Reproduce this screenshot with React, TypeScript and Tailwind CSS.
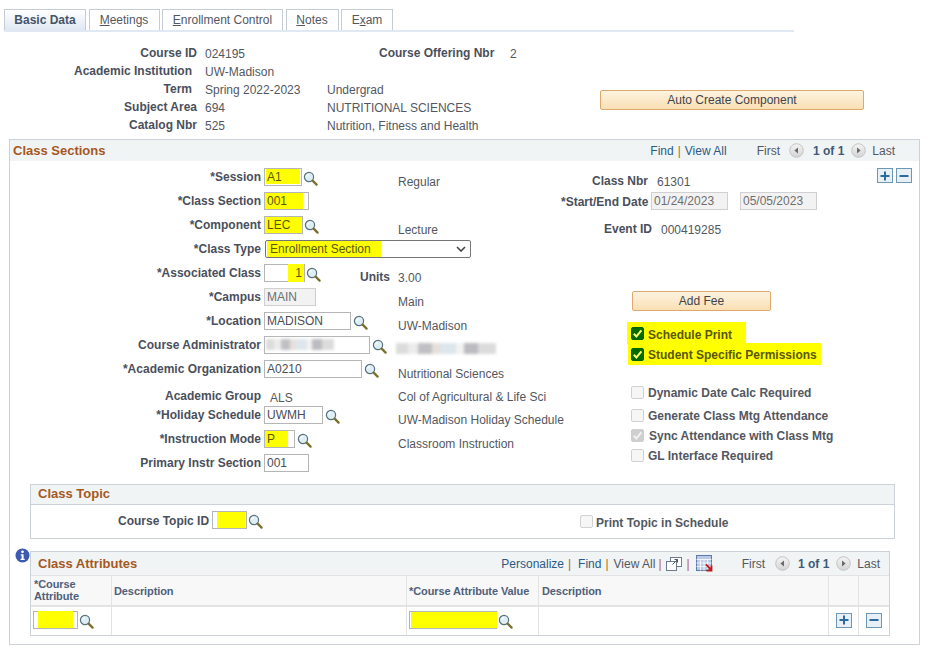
import React from "react";

const Lens = ({ className = "" }: { className?: string }) => (
  <svg width="15" height="15" viewBox="0 0 15 15" className={"mt-[2px] shrink-0 " + className}>
    <circle cx="6" cy="6" r="4.6" fill="#dfeef5" stroke="#56707c" strokeWidth="1.2" />
    <path d="M3.5 5.5a3 3 0 0 1 2.5-2" stroke="#ffffff" strokeWidth="1.2" fill="none" />
    <path d="M9.6 9.6l4 4" stroke="#77702c" strokeWidth="2.2" strokeLinecap="round" />
  </svg>
);

const NavArrow = ({ dir }: { dir: "l" | "r" }) => (
  <svg width="15" height="15" viewBox="0 0 15 15" className="shrink-0">
    <defs>
      <linearGradient id="navg" x1="0" y1="0" x2="0" y2="1">
        <stop offset="0" stopColor="#f4f4f4" />
        <stop offset="1" stopColor="#d4d4d4" />
      </linearGradient>
    </defs>
    <circle cx="7.5" cy="7.5" r="6.8" fill="url(#navg)" stroke="#c4c4c4" />
    <path d={dir === "l" ? "M9 4.5v6l-3.6-3z" : "M6 4.5v6l3.6-3z"} fill="#6a6a6a" />
  </svg>
);

const PlusBtn = () => (
  <span className="flex h-[15px] w-[16px] items-center justify-center border border-[#6d98b5] bg-[#e8f0f5]">
    <svg width="10" height="10" viewBox="0 0 10 10"><path d="M5 0.5v9M0.5 5h9" stroke="#2b6a9f" strokeWidth="2" /></svg>
  </span>
);
const MinusBtn = () => (
  <span className="flex h-[15px] w-[16px] items-center justify-center border border-[#6d98b5] bg-[#e8f0f5]">
    <svg width="10" height="10" viewBox="0 0 10 10"><path d="M0.5 5h9" stroke="#2b6a9f" strokeWidth="2" /></svg>
  </span>
);

type InputProps = { w: number; text?: string; hl?: [number, number, number?, number?]; right?: boolean; disabled?: boolean; children?: React.ReactNode };
const Input = ({ w, text, hl, right, disabled, children }: InputProps) => (
  <div
    className={"relative h-[18px] shrink-0 border text-[12px] leading-[14px] " + (disabled ? "border-[#d0d0d0] bg-[#f2f2f2] text-[#6f6f6f]" : "border-[#b5b5b5] bg-white text-[#4a4d55]")}
    style={{ width: w }}
  >
    {hl && <span className="absolute bg-[#ffff00]" style={{ left: hl[0], width: hl[1], top: hl[2] ?? 0, bottom: hl[3] ?? 0 }} />}
    <span className={"absolute inset-x-[2px] top-[1px] whitespace-nowrap " + (right ? "text-right " : "") + (hl ? "text-[#5a5700]" : "")}>{text}</span>
    {children}
  </div>
);

const Blur = ({ w }: { w: number }) => (
  <div className="flex h-[11px] blur-[1.5px]" style={{ width: w }}>
    <span className="w-[12%] bg-[#dcdcdc]" />
    <span className="w-[10%] bg-[#ececec]" />
    <span className="w-[14%] bg-[#c0c0c4]" />
    <span className="w-[8%] bg-[#e6e0dc]" />
    <span className="w-[16%] bg-[#dde6ec]" />
    <span className="w-[8%] bg-[#f2f2f2]" />
    <span className="w-[14%] bg-[#bcbcc0]" />
    <span className="w-[18%] bg-[#dcdcdc]" />
  </div>
);

type RowProps = { label: string; control: React.ReactNode; desc?: React.ReactNode; h?: string; labelCls?: string };
const Row = ({ label, control, desc, h = "h-6", labelCls = "pb-[0px]" }: RowProps) => (
  <div className={"flex items-center " + h}>
    <div className={"w-[252px] shrink-0 pr-[1px] text-right font-bold text-[#4a4f5c] whitespace-nowrap " + labelCls}>{label}</div>
    <div className="ml-[2px] flex w-[134px] shrink-0 items-center">{control}</div>
    <div className="mt-[9px] whitespace-nowrap text-[#53575f]">{desc}</div>
  </div>
);

const Check = ({ on, dis, hlc }: { on?: boolean; dis?: boolean; hlc?: boolean }) => (
  <span
    className={
      "flex h-[13px] w-[13px] shrink-0 items-center justify-center rounded-[2px] border " +
      (hlc ? "border-[#006400] bg-[#006b00]" : dis ? "border-[#cfcfcf] bg-[#cfcfcf]" : "border-[#d2d2d2] bg-[#f6f6f6]")
    }
  >
    {on && (
      <svg width="11" height="11" viewBox="0 0 11 11">
        <path d="M1.8 5.8l2.6 2.6 5-6" fill="none" stroke={hlc ? "#ffff66" : "#f2f2f2"} strokeWidth="2" />
      </svg>
    )}
  </span>
);

const CheckRow = ({ label, on, dis, className = "", gap = "ml-[4px]" }: { label: string; on?: boolean; dis?: boolean; className?: string; gap?: string }) => (
  <div className={"flex h-4 items-center pl-[70px] " + className}>
    <Check on={on} dis={dis} />
    <span className={"pt-[2px] font-bold text-[#53575f] whitespace-nowrap " + gap}>{label}</span>
  </div>
);

const Tab = ({ active, u, before, after, w }: { active?: boolean; u?: string; before?: string; after?: string; w: string }) => (
  <div
    className={
      "flex h-[21px] items-center justify-center border border-b-0 border-[#c5ccd3] text-[12px] " +
      w + " " +
      (active ? "bg-gradient-to-b from-white to-[#dfe8f3] font-bold text-[#44546a]" : "bg-white text-[#53575f]")
    }
  >
    {before}
    {u && <span className="underline">{u}</span>}
    {after}
  </div>
);

const Sep = () => <span className="font-normal text-[#b9641a]">|</span>;

const TH = ({ children, className = "" }: { children?: React.ReactNode; className?: string }) => (
  <div className={"flex items-center bg-[#f8f8f8] px-[2px] text-[11px] font-bold leading-[12px] tracking-[-0.1px] text-[#50607a] " + className}>{children}</div>
);
const TD = ({ children, className = "" }: { children?: React.ReactNode; className?: string }) => (
  <div className={"flex items-center bg-white pb-[2px] " + className}>{children}</div>
);

const Hdr = ({ label, w, value, vcls = "" }: { label: string; w: string; value: string; vcls?: string }) => (
  <>
    <div className={"shrink-0 text-right font-bold text-[#4a4f5c] whitespace-nowrap pb-[3px] " + w}>{label}</div>
    <div className={"text-[#53575f] whitespace-nowrap " + vcls}>{value}</div>
  </>
);

export default function App() {
  return (
    <div className="h-[651px] w-[932px] overflow-hidden bg-white pt-[9px] font-['Liberation_Sans',Arial,sans-serif] text-[12px] leading-[14px] text-[#53575f]">
      {/* tabs */}
      <div className="ml-[4px] flex w-[790px] gap-[2.5px] border-b-2 border-[#dfe8f3]">
        <Tab active before="Basic Data" w="w-[82px]" />
        <Tab u="M" after="eetings" w="w-[71px]" />
        <Tab u="E" after="nrollment Control" w="w-[121px]" />
        <Tab u="N" after="otes" w="w-[53px]" />
        <Tab before="E" u="x" after="am" w="w-[52px]" />
      </div>

      {/* header info */}
      <div className="mt-[13px] flex">
        <div className="w-[600px] shrink-0">
          <div className="flex h-[18px] items-center">
            <Hdr label="Course ID" w="w-[197px]" value="024195" vcls="ml-[8px] w-[174px]" />
            <div className="w-[115px] shrink-0 whitespace-nowrap pb-[3px] font-bold text-[#4a4f5c]">Course Offering Nbr</div>
            <div className="ml-[16px]">2</div>
          </div>
          <div className="flex h-[18px] items-center">
            <Hdr label="Academic Institution" w="w-[192px]" value="UW-Madison" vcls="ml-[13px]" />
          </div>
          <div className="flex h-[18px] items-center">
            <Hdr label="Term" w="w-[192px]" value="Spring 2022-2023" vcls="ml-[13px] w-[122px]" />
            <div>Undergrad</div>
          </div>
          <div className="flex h-[18px] items-center">
            <Hdr label="Subject Area" w="w-[197px]" value="694" vcls="ml-[8px] w-[122px]" />
            <div>NUTRITIONAL SCIENCES</div>
          </div>
          <div className="flex h-[18px] items-center">
            <Hdr label="Catalog Nbr" w="w-[197px]" value="525" vcls="ml-[8px] w-[122px]" />
            <div>Nutrition, Fitness and Health</div>
          </div>
        </div>
        <div className="pt-[45px]">
          <button className="block h-[20px] w-[264px] rounded-[2px] border border-[#e0a86c] bg-gradient-to-b from-[#fdf3e0] to-[#f9dfb4] text-[12px] text-[#3f444c]">Auto Create Component</button>
        </div>
      </div>

      {/* Class Sections panel */}
      <div className="ml-[9px] mt-[4px] h-[506px] w-[911px] border border-[#ccd2d8]">
        <div className="flex h-[21px] items-center bg-[#f1f4f5] pl-[3px] pr-[24px]">
          <div className="text-[13px] font-bold text-[#a5581f]">Class Sections</div>
          <div className="ml-auto flex items-center">
            <span className="text-[#2c5a87]">Find</span>
            <span className="ml-[4px]"><Sep /></span>
            <span className="ml-[4px] text-[#2c5a87]">View All</span>
            <span className="ml-[30px]">First</span>
            <span className="ml-[9px]"><NavArrow dir="l" /></span>
            <span className="ml-[9px] font-bold text-[#3f5a7a]">1 of 1</span>
            <span className="ml-[7px]"><NavArrow dir="r" /></span>
            <span className="ml-[6px]">Last</span>
          </div>
        </div>

        <div className="flex">
          {/* left form */}
          <div className="w-[551px] shrink-0 pt-[4px]">
            <Row label="*Session" control={<><Input w={38} text="A1" hl={[1, 34, 0, 1]} /><Lens className="ml-[1px]" /></>} desc="Regular" />
            <Row label="*Class Section" control={<Input w={45} text="001" hl={[0, 38]} />} />
            <Row label="*Component" control={<><Input w={39} text="LEC" hl={[0, 37]} /><Lens className="ml-[1px]" /></>} desc="Lecture" />
            <Row
              label="*Class Type"
              control={
                <div className="relative ml-[1px] h-[18px] w-[206px] shrink-0 rounded-[2px] border border-[#767676] bg-white">
                  <span className="absolute inset-y-0 left-[1px] w-[114px] bg-[#ffff00]" />
                  <span className="absolute left-[4px] top-[1px] whitespace-nowrap text-[#5a5700]">Enrollment Section</span>
                  <svg width="10" height="6" viewBox="0 0 10 6" className="absolute right-[4px] top-[5px]"><path d="M1 1l4 4 4-4" fill="none" stroke="#444" strokeWidth="1.6" /></svg>
                </div>
              }
            />
            <div className="flex h-6 items-center">
              <div className="w-[252px] shrink-0 pr-[1px] text-right font-bold text-[#4a4f5c]">*Associated Class</div>
              <div className="ml-[2px] flex w-[134px] shrink-0 items-center">
                <Input w={41} text="1" right hl={[23, 16, -1, -1]} />
                <Lens className="ml-[1px]" />
              </div>
              <div className="mt-[8px] -ml-[38px] w-[38px] font-bold text-[#4a4f5c]">Units</div>
              <div className="mt-[9px]">3.00</div>
            </div>
            <Row label="*Campus" control={<Input w={52} text="MAIN" disabled />} desc="Main" />
            <Row label="*Location" control={<><Input w={87} text="MADISON" /><Lens className="ml-[2px]" /></>} desc="UW-Madison" />
            <Row
              label="Course Administrator"
              control={
                <>
                  <Input w={106}><div className="absolute left-[1px] top-[2px]"><Blur w={68} /></div></Input>
                  <Lens className="ml-[2px]" />
                </>
              }
              desc={<div className="-ml-[2px] mb-[3px]"><Blur w={100} /></div>}
            />
            <Row label="*Academic Organization" control={<><Input w={98} text="A0210" /><Lens className="ml-[2px]" /></>} desc="Nutritional Sciences" />
            <Row label="Academic Group" h="h-[22px]" labelCls="pt-[7px]" control={<span className="ml-[6px] mt-[11px]">ALS</span>} desc="Col of Agricultural & Life Sci" />
            <Row label="*Holiday Schedule" control={<><Input w={59} text="UWMH" /><Lens className="ml-[2px]" /></>} desc="UW-Madison Holiday Schedule" />
            <Row label="*Instruction Mode" control={<><Input w={31} text="P" hl={[0, 23]} /><Lens className="ml-[2px]" /></>} desc="Classroom Instruction" />
            <Row label="Primary Instr Section" control={<Input w={45} text="001" />} />
          </div>

          {/* right form */}
          <div className="flex-1">
            <div className="relative pt-[13px]">
              <div className="absolute right-[7px] top-[7px] flex gap-[3px]">
                <PlusBtn />
                <MinusBtn />
              </div>
              <div className="flex h-4 items-center">
                <div className="w-[87px] pb-[2px] text-right font-bold text-[#4a4f5c]">Class Nbr</div>
                <div className="ml-[9px]">61301</div>
              </div>
              <div className="mt-[2px] flex items-center">
                <div className="w-[86px] whitespace-nowrap pt-[2px] text-right font-bold text-[#4a4f5c]">*Start/End Date</div>
                <div className="ml-[4px]"><Input w={77} text="01/24/2023" disabled /></div>
                <div className="ml-[12px]"><Input w={77} text="05/05/2023" disabled /></div>
              </div>
              <div className="mt-[12px] flex h-4 items-center">
                <div className="w-[91px] pb-[2px] text-right font-bold text-[#4a4f5c]">Event ID</div>
                <div className="ml-[9px]">000419285</div>
              </div>
            </div>
            <div className="ml-[71px] mt-[53px]">
              <button className="block h-[20px] w-[139px] rounded-[2px] border border-[#e0a86c] bg-gradient-to-b from-[#fdf3e0] to-[#f9dfb4] text-[12px] text-[#3f444c]">Add Fee</button>
            </div>
            <div className="ml-[66px] mt-[11px] flex h-[22px] w-[119px] items-center bg-[#ffff00] pl-[4px]">
              <Check on hlc />
              <span className="ml-[4px] whitespace-nowrap pt-[3px] font-bold text-[#5a5700]">Schedule Print</span>
            </div>
            <div className="ml-[67px] -mt-px flex h-[22px] w-[193px] items-center bg-[#ffff00] pl-[3px]">
              <Check on hlc />
              <span className="ml-[4px] whitespace-nowrap pt-[1px] font-bold text-[#5a5700]">Student Specific Permissions</span>
            </div>
            <CheckRow className="mt-[19px]" label="Dynamic Date Calc Required" />
            <CheckRow className="mt-[7px]" label="Generate Class Mtg Attendance" />
            <CheckRow className="mt-[4px]" label="Sync Attendance with Class Mtg" on dis gap="ml-[5px]" />
            <CheckRow className="mt-[4px]" label="GL Interface Required" />
          </div>
        </div>

        {/* Class Topic */}
        <div className="ml-[20px] mt-[9px] w-[865px] border border-[#ccd2d8]">
          <div className="flex h-[20px] items-center border-b border-[#ccd2d8] bg-[#f1f4f5] pb-[2px] pl-[7px] text-[13px] font-bold text-[#a5581f]">Class Topic</div>
          <div className="flex h-[33px] items-center pb-[3px]">
            <div className="ml-[87px] w-[94px] whitespace-nowrap pt-[1px] font-bold text-[#4a4f5c]">Course Topic ID</div>
            <Input w={35} hl={[4, 28]} />
            <Lens className="ml-[1px]" />
            <div className="ml-[317px] flex items-center pt-[3px]">
              <Check />
              <span className="ml-[3px] pt-[2px] font-bold text-[#53575f]">Print Topic in Schedule</span>
            </div>
          </div>
        </div>

        {/* Class Attributes */}
        <div className="mt-[12px] flex items-start pl-[5px]">
          <svg width="15" height="15" viewBox="0 0 15 15" className="-mt-[3px] shrink-0">
            <circle cx="7.5" cy="7.5" r="7" fill="#3a5bb0" />
            <circle cx="7.5" cy="3.8" r="1.4" fill="#fff" />
            <path d="M5.8 6.2h2.8v4.6h1.1v1.3H5.5v-1.3h1.1V7.5h-.8z" fill="#fff" />
          </svg>
          <div className="w-[860px] border border-[#ccd2d8]">
            <div className="flex h-[23px] items-center bg-[#f1f4f5] pl-[7px] pr-[9px]">
              <div className="text-[13px] font-bold text-[#a5581f]">Class Attributes</div>
              <div className="ml-auto flex items-center">
                <span className="text-[#2c5a87]">Personalize</span>
                <span className="ml-[4px]"><Sep /></span>
                <span className="ml-[7px] text-[#2c5a87]">Find</span>
                <span className="ml-[4px]"><Sep /></span>
                <span className="ml-[5px] text-[#53575f]">View All</span>
                <span className="ml-[3px]"><Sep /></span>
                <svg width="16" height="14" viewBox="0 0 16 14" className="ml-[4px]">
                  <rect x="4.5" y="0.5" width="11" height="9" fill="#fff" stroke="#6f7b88" />
                  <rect x="0.5" y="4.5" width="10" height="9" fill="#fff" stroke="#6f7b88" />
                  <path d="M6.5 7.5l5-5M8.5 2.5h3v3" fill="none" stroke="#4a5a6a" />
                </svg>
                <span className="ml-[5px]"><Sep /></span>
                <svg width="17" height="17" viewBox="0 0 17 17" className="ml-[6px]">
                  <rect x="0.5" y="0.5" width="15" height="15" fill="#b9c9e6" stroke="#5b79ad" />
                  <path d="M0.5 4.5h15M0.5 8h15M0.5 11.5h15M4.5 4.5v11M8 4.5v11M11.5 4.5v11" stroke="#ffffff" strokeWidth="0.8" />
                  <path d="M10 9.5l5 5M15.5 10.5v5h-5" fill="none" stroke="#c01818" strokeWidth="1.8" />
                </svg>
                <span className="ml-[29px]">First</span>
                <span className="ml-[10px]"><NavArrow dir="l" /></span>
                <span className="ml-[8px] font-bold text-[#3f5a7a]">1 of 1</span>
                <span className="ml-[7px]"><NavArrow dir="r" /></span>
                <span className="ml-[6px]">Last</span>
              </div>
            </div>
            <div className="grid grid-cols-[80px_294px_131px_289px_29px_30px] grid-rows-[29px_28px] gap-x-px gap-y-[2px] bg-[#e3e3e3] pt-px">
              <TH className="!items-start pl-[3px] pt-[2px]"><span>*Course<br />Attribute</span></TH>
              <TH>Description</TH>
              <TH>*Course Attribute Value</TH>
              <TH className="pl-[3px]">Description</TH>
              <TH />
              <TH />
              <TD className="pl-[2px]"><Input w={45} hl={[4, 35, -1, 0]} /><Lens className="ml-[1px]" /></TD>
              <TD />
              <TD className="pl-[2px]"><Input w={88} hl={[1, 86]} /><Lens className="ml-[1px]" /></TD>
              <TD />
              <TD className="justify-center"><PlusBtn /></TD>
              <TD className="justify-center"><MinusBtn /></TD>
            </div>
          </div>
        </div>
      </div>
    </div>
  );
}
